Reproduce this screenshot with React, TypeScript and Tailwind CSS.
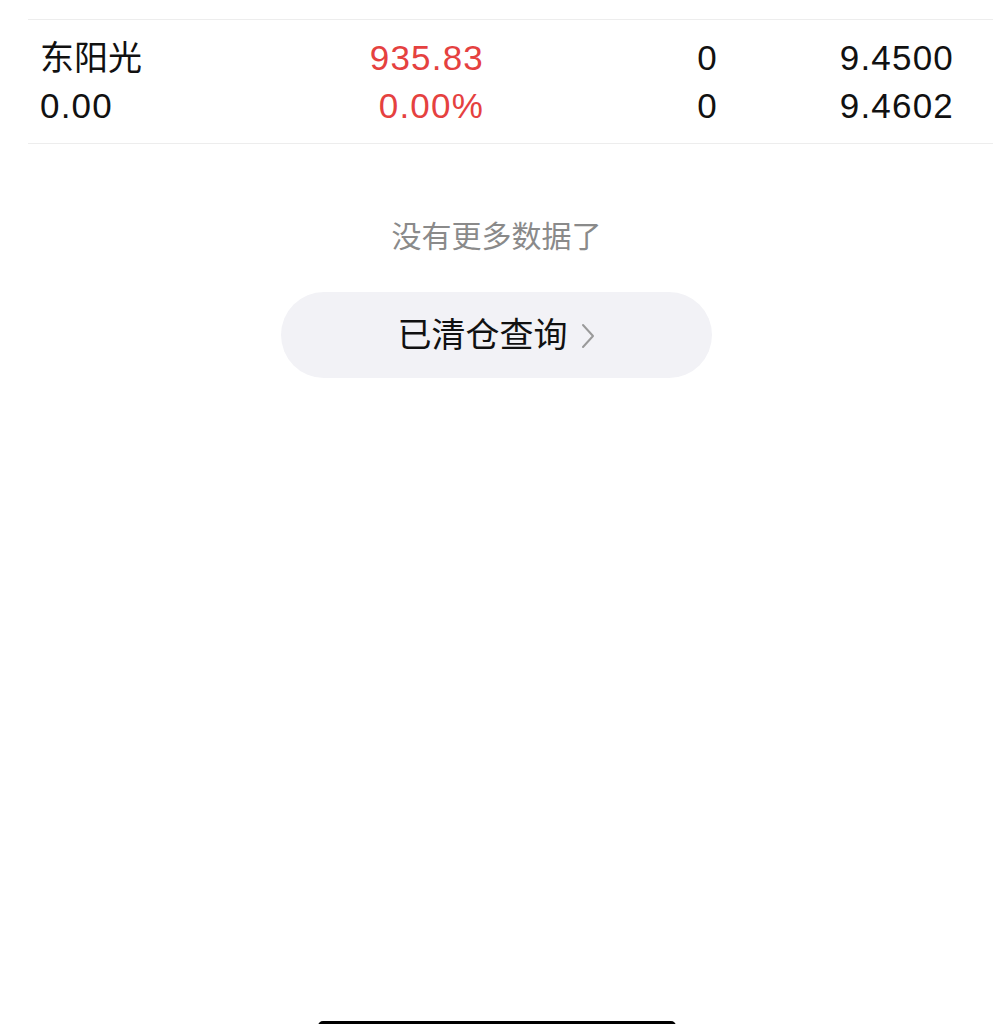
import React from 'react';

interface Position {
    name: string;
    pnl: string;
    marketValue: string;
    pnlRate: string;
    qty: string;
    available: string;
    price: string;
    cost: string;
}

const positions: Position[] = [
    {
        name: '东阳光',
        pnl: '0.00',
        marketValue: '935.83',
        pnlRate: '0.00%',
        qty: '0',
        available: '0',
        price: '9.4500',
        cost: '9.4602',
    },
];

const font = { fontFamily: '"Liberation Sans", "Noto Sans CJK SC", sans-serif' };

const PositionRow: React.FC<{ p: Position }> = ({ p }) => {
    return (
        <div className="ml-[28px] border-b border-[#ededed] pl-[12px] pr-[39px] pt-[14px] pb-[13px]">
            {/* две строки: наименование / прибыль */}
            {[
                [p.name, p.marketValue, p.qty, p.price],
                [p.pnl, p.pnlRate, p.available, p.cost],
            ].map((line, i) => (
                <div key={i} className="flex h-[48px] items-center text-[35px] leading-[48px] tracking-[1.2px]">
                    <div className={i === 0 ? 'w-[200px] text-[34px] tracking-normal text-[#111]' : 'w-[200px] text-[#111]'}>
                        {line[0]}
                    </div>
                    <div className="w-[244px] text-right text-[#e5413f]">{line[1]}</div>
                    <div className="w-[234px] text-right text-[#111]">{line[2]}</div>
                    <div className="flex-1 text-right text-[#111]">{line[3]}</div>
                </div>
            ))}
        </div>
    );
};

export default function App() {
    return (
        <div className="flex h-[1024px] w-full flex-col overflow-hidden bg-white" style={font}>
            {/* хвост предыдущей строки */}
            <div className="ml-[28px] h-[20px] border-b border-[#ededed]" />

            {positions.map((p) => (
                <PositionRow key={p.name} p={p} />
            ))}

            <div className="mt-[73px] text-center text-[30px] leading-[40px] text-[#8a8a8a]">
                没有更多数据了
            </div>

            <button className="mx-auto mt-[35px] flex h-[86px] w-[431px] items-center justify-center gap-[12px] rounded-full bg-[#f2f2f6] text-[34px] text-[#111]">
                <span>已清仓查询</span>
                <svg width="16" height="28" viewBox="0 0 16 28" fill="none" className="mt-[1px]">
                    <path d="M3 3 L13 14 L3 25" stroke="#9a9a9a" strokeWidth="2" strokeLinecap="round" strokeLinejoin="round" />
                </svg>
            </button>

            {/* индикатор home */}
            <div className="mx-auto -mb-[7px] mt-auto h-[10px] w-[358px] rounded-full bg-black" />
        </div>
    );
}
